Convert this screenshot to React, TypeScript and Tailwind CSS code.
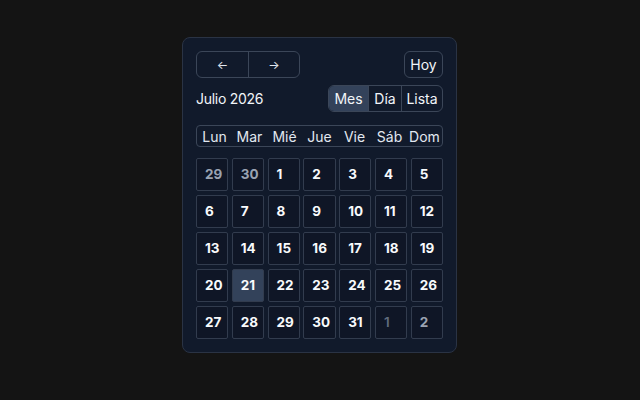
import React from "react";

type Day = { n: number; muted?: "dim" | "faint"; today?: boolean };

const weekdays = ["Lun", "Mar", "Mié", "Jue", "Vie", "Sáb", "Dom"];

const days: Day[] = [
  { n: 29, muted: "dim" },
  { n: 30, muted: "dim" },
  ...Array.from({ length: 31 }, (_, i) => ({ n: i + 1, today: i + 1 === 21 })),
  { n: 1, muted: "faint" },
  { n: 2, muted: "dim" },
];

export default function App() {
  return (
    <div
      className="w-[640px] h-[400px] bg-[#141414] flex items-start justify-center pt-[37px] pr-[1px]"
      style={{ fontFamily: "Inter, 'Noto Sans', sans-serif" }}
    >
      <div className="w-[275px] rounded-lg border border-[#2a3344] bg-[#111a2b] px-[13px] pt-[13px] pb-[13px] text-slate-100">
        {/* toolbar */}
        <div className="flex items-center justify-between">
          <div className="flex h-[27px] rounded-md border border-[#3b4658] overflow-hidden">
            <button className="w-[51px] flex items-center justify-center text-[12px] text-slate-200">←</button>
            <button className="w-[51px] flex items-center justify-center border-l border-[#3b4658] text-[12px] text-slate-200">→</button>
          </div>
          <button className="h-[27px] w-[39px] rounded-md border border-[#3b4658] text-[14px] text-slate-100">Hoy</button>
        </div>

        <div className="mt-[7px] flex items-center justify-between">
          <span className="text-[14px] tracking-[-0.02em] text-slate-100">Julio 2026</span>
          <div className="flex h-[27px] rounded-md border border-[#3b4658] overflow-hidden text-[14px]">
            <span className="w-[39px] flex items-center justify-center bg-[#33425a]">Mes</span>
            <span className="w-[33px] flex items-center justify-center border-l border-[#3b4658]">Día</span>
            <span className="w-[41px] flex items-center justify-center border-l border-[#3b4658]">Lista</span>
          </div>
        </div>

        {/* weekday header */}
        <div className="mt-[13px] grid grid-cols-7 h-[22px] rounded-sm border border-[#3b4658] text-[14px] text-slate-200">
          {weekdays.map((w) => (
            <span key={w} className="flex items-center justify-center">
              {w}
            </span>
          ))}
        </div>

        {/* day grid */}
        <div className="mt-[11px] grid grid-cols-7 gap-x-[3.5px] gap-y-[4px]">
          {days.map((d, i) => (
            <div
              key={i}
              className={`h-[33px] rounded-[2px] border border-[#323c4e] flex items-center px-[8px] text-[13.5px] font-bold ${
                d.today ? "bg-[#33425a]" : "bg-[#0f1626]"
              } ${
                d.muted === "dim"
                  ? "text-[#9aa3b2]"
                  : d.muted === "faint"
                  ? "text-[#5f6b7e] font-semibold"
                  : "text-slate-50"
              }`}
            >
              {d.n}
            </div>
          ))}
        </div>
      </div>
    </div>
  );
}
